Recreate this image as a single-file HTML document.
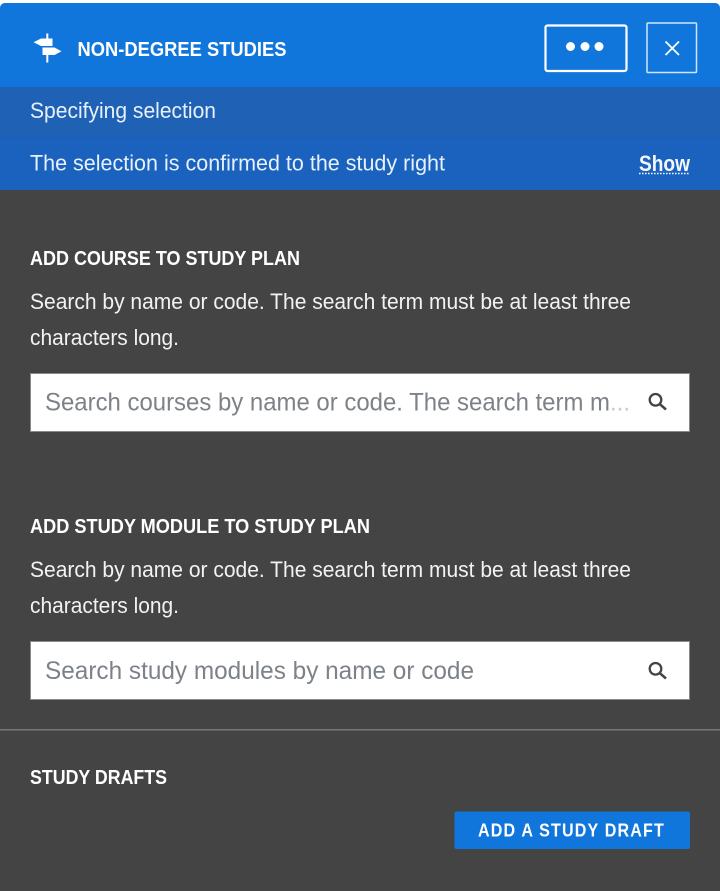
<!DOCTYPE html>
<html lang="en"><head><meta charset="utf-8"><title>Non-degree studies</title>
<style>
html,body{margin:0;padding:0;width:720px;height:891px;overflow:hidden;background:#fff}
svg{display:block}
text{font-family:"Liberation Sans",sans-serif}
</style></head><body>
<svg width="720" height="891" viewBox="0 0 720 891" xmlns="http://www.w3.org/2000/svg">
<rect width="720" height="891" fill="#fff"/>
<path d="M0 891V9Q0 3 6 3H714Q720 3 720 9V891Z" fill="#444444"/>
<path d="M0 87V9Q0 3 6 3H714Q720 3 720 9V87Z" fill="#1076db"/>
<rect y="87" width="720" height="50" fill="#1f61b4"/>
<rect y="137" width="720" height="53" fill="#1a62bd"/>
<rect y="137" width="720" height="1.500" fill="#1c5fb6"/>

<!-- signpost icon -->
<path d="M46.300 33.500H48.300V38.500H52.500V46H41L33.500 42.300L41 38.500H46.300ZM42.500 47.500H54.500L61.500 51.300L54.500 55H48.300V62.500H46.300V55H42.500Z" fill="#fff"/>
<text x="77.500" y="56" font-size="20" font-weight="700" fill="#fff" textLength="209" lengthAdjust="spacingAndGlyphs">NON-DEGREE STUDIES</text>

<rect x="545.500" y="25.500" width="81" height="45.500" rx="2" fill="none" stroke="#fff" stroke-width="2.200"/>
<circle cx="570.500" cy="46.500" r="4.500" fill="#fff"/><circle cx="585" cy="46.500" r="4.500" fill="#fff"/><circle cx="599" cy="46.500" r="4.500" fill="#fff"/>
<rect x="647" y="23" width="49.500" height="49.500" rx="1" fill="none" stroke="#cfe5fa" stroke-width="1.500"/>
<path d="M665.500 41.500L679 55M679 41.500L665.500 55" stroke="#fff" stroke-width="1.800" fill="none"/>

<text x="30" y="118" font-size="22" fill="#e8f1fb" textLength="186" lengthAdjust="spacingAndGlyphs">Specifying selection</text>
<text x="30" y="170.500" font-size="22" fill="#e8f1fb" textLength="415" lengthAdjust="spacingAndGlyphs">The selection is confirmed to the study right</text>
<text x="639" y="171" font-size="22" font-weight="700" fill="#f4f8fd" textLength="51" lengthAdjust="spacingAndGlyphs">Show</text>
<line x1="639" y1="173.500" x2="690" y2="173.500" stroke="#f4f8fd" stroke-width="1.600" stroke-dasharray="1.600 1.400"/>

<text x="30" y="265" font-size="20" font-weight="700" fill="#fff" textLength="270" lengthAdjust="spacingAndGlyphs">ADD COURSE TO STUDY PLAN</text>
<text x="30" y="309" font-size="22" fill="#f2f2f2" textLength="601" lengthAdjust="spacingAndGlyphs">Search by name or code. The search term must be at least three</text>
<text x="30" y="345" font-size="22" fill="#f2f2f2" textLength="149" lengthAdjust="spacingAndGlyphs">characters long.</text>

<rect x="30.500" y="373.500" width="659" height="58" fill="#fff" stroke="#8a8a8a" stroke-width="1"/>
<text x="45" y="410.500" font-size="25" fill="#7d8288" textLength="565" lengthAdjust="spacingAndGlyphs">Search courses by name or code. The search term m</text>
<text x="610" y="410.500" font-size="25" fill="#c8cacd" textLength="20" lengthAdjust="spacingAndGlyphs">...</text>
<circle cx="655.500" cy="399.800" r="5.800" fill="none" stroke="#444" stroke-width="2.300"/>
<path d="M660 404.300L666 409.500" stroke="#444" stroke-width="2.600" fill="none"/>

<text x="30" y="533" font-size="20" font-weight="700" fill="#fff" textLength="340" lengthAdjust="spacingAndGlyphs">ADD STUDY MODULE TO STUDY PLAN</text>
<text x="30" y="577" font-size="22" fill="#f2f2f2" textLength="601" lengthAdjust="spacingAndGlyphs">Search by name or code. The search term must be at least three</text>
<text x="30" y="613" font-size="22" fill="#f2f2f2" textLength="149" lengthAdjust="spacingAndGlyphs">characters long.</text>

<rect x="30.500" y="641.500" width="659" height="58" fill="#fff" stroke="#8a8a8a" stroke-width="1"/>
<text x="45" y="679" font-size="25" fill="#7d8288" textLength="429" lengthAdjust="spacingAndGlyphs">Search study modules by name or code</text>
<circle cx="655.500" cy="668.800" r="5.800" fill="none" stroke="#444" stroke-width="2.300"/>
<path d="M660 673.300L666 678.500" stroke="#444" stroke-width="2.600" fill="none"/>

<rect y="729" width="720" height="1.500" fill="#777"/>
<text x="30" y="784" font-size="20" font-weight="700" fill="#fff" textLength="137" lengthAdjust="spacingAndGlyphs">STUDY DRAFTS</text>

<rect x="454.500" y="811.500" width="235.500" height="37.500" rx="2" fill="#1076db"/>
<text x="478" y="836.500" font-size="18" font-weight="700" letter-spacing="1.300" fill="#fff" textLength="187" lengthAdjust="spacingAndGlyphs">ADD A STUDY DRAFT</text>
</svg>
</body></html>
